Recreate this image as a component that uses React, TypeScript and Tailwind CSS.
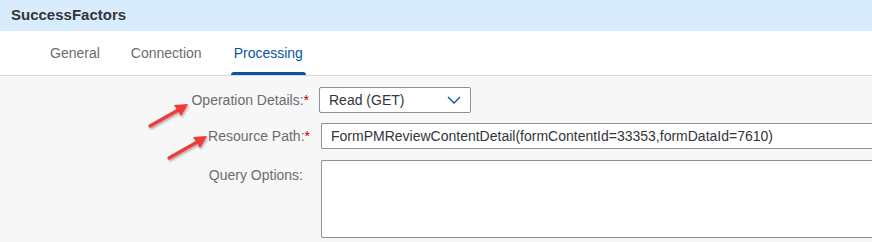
import { FC } from 'react';

const Arrow: FC<{ className: string }> = ({ className }) => (
  <svg className={className} width="48" height="32" viewBox="0 0 48 32">
    <defs>
      <filter id="sh" x="-20%" y="-20%" width="140%" height="140%">
        <feDropShadow dx="1" dy="1.5" stdDeviation="1" floodColor="#000" floodOpacity="0.35" />
      </filter>
    </defs>
    <g filter="url(#sh)">
      <line x1="3" y1="27" x2="33" y2="10" stroke="#ef3b3b" strokeWidth="3.2" strokeLinecap="round" />
      <polygon points="41,5 27,6 34,17" fill="#ef3b3b" />
    </g>
  </svg>
);

const App: FC = () => {
  return (
    <div className="relative h-[242px] w-[872px] overflow-hidden bg-[#f7f7f7] font-['Liberation_Sans',Arial,sans-serif]">
      {/* header */}
      <div className="flex h-[31px] items-center bg-[#d9ecfe] pl-[11px]">
        <h1 className="text-[15px] font-bold text-[#32363a]">SuccessFactors</h1>
      </div>

      {/* tabs */}
      <div className="flex h-[45px] items-end border-b border-[#d9d9d9] bg-white pl-[50px] text-[14px]">
        <div className="mr-[31px] pb-[11px] text-[#6a6d70]">General</div>
        <div className="mr-[29px] pb-[11px] text-[#6a6d70]">Connection</div>
        <div className="relative px-[3px] pb-[11px] text-[#0854a0]">
          Processing
          <div className="absolute bottom-0 left-0 right-0 h-[3px] rounded-t-sm bg-[#0854a0]" />
        </div>
      </div>

      {/* form */}
      <div className="flex flex-col pt-[11px] text-[14px]">
        <div className="flex items-center">
          <label className="w-[319px] pr-[10px] text-right text-[#6a6d70]">
            Operation Details:<span className="text-[#bb0000]">*</span>
          </label>
          <div className="flex h-[26px] w-[152px] items-center justify-between rounded-[2px] border border-[#89919a] bg-white pl-[9px] pr-[9px] text-[#32363a]">
            <span>Read (GET)</span>
            <svg width="14" height="8" viewBox="0 0 14 8">
              <polyline points="1,1 7,7 13,1" fill="none" stroke="#0854a0" strokeWidth="1.3" />
            </svg>
          </div>
        </div>

        <div className="mt-[10px] flex items-center">
          <label className="w-[321px] pr-[11px] text-right text-[#6a6d70]">
            Resource Path:<span className="text-[#bb0000]">*</span>
          </label>
          <div className="flex h-[26px] flex-1 items-center rounded-l-[2px] border border-r-0 border-[#89919a] bg-white pl-[9px] text-[#32363a]">
            FormPMReviewContentDetail(formContentId=33353,formDataId=7610)
          </div>
        </div>

        <div className="mt-[11px] flex items-start">
          <label className="w-[321px] pr-[18px] pt-[5px] text-right text-[#6a6d70]">Query Options:</label>
          <div className="h-[78px] flex-1 rounded-l-[2px] border border-r-0 border-[#89919a] bg-white" />
        </div>
      </div>

      {/* annotation arrows */}
      <Arrow className="absolute left-[147px] top-[99px]" />
      <Arrow className="absolute left-[166px] top-[131px]" />
    </div>
  );
};

export default App;
